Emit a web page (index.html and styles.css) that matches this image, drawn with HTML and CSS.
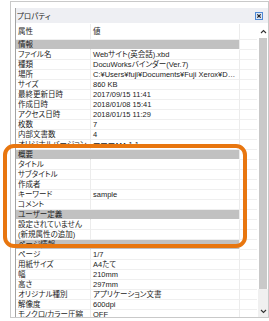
FILE: index.html
```html
<!DOCTYPE html>
<html lang="ja">

<head>
    <meta charset="UTF-8">
    <title>プロパティ</title>
    <link rel="stylesheet" href="styles.css">
</head>

<body>

    <div class="frame">
        <div class="pane">
            <div class="titlebar">
                <span class="title">プロパティ</span>
                <span class="close">
                    <svg width="8" height="8" viewBox="0 0 8 8">
                        <rect x="0.5" y="0.5" width="7" height="7" fill="#dbe7f7" stroke="#4f8ad6"/>
                        <path d="M2.3 2.3 L5.7 5.7 M5.7 2.3 L2.3 5.7" stroke="#222" stroke-width="1.2"/>
                    </svg>
                </span>
            </div>

            <div class="content">
                <div class="grid">
                    <div class="row head"><div class="name">属性</div><div class="val">値</div><div class="pad"></div></div>

                    <div class="row group"><div class="name">情報</div><div class="val"></div><div class="pad"></div></div>
                    <div class="row"><div class="name">ファイル名</div><div class="val">Webサイト(英会話).xbd</div><div class="pad"></div></div>
                    <div class="row"><div class="name">種類</div><div class="val">DocuWorksバインダー(Ver.7)</div><div class="pad"></div></div>
                    <div class="row"><div class="name">場所</div><div class="val">C:¥Users¥fuji¥Documents¥Fuji Xerox¥Documents¥Web</div><div class="pad"></div></div>
                    <div class="row"><div class="name">サイズ</div><div class="val">860 KB</div><div class="pad"></div></div>
                    <div class="row"><div class="name">最終更新日時</div><div class="val">2017/09/15 11:41</div><div class="pad"></div></div>
                    <div class="row"><div class="name">作成日時</div><div class="val">2018/01/08 15:41</div><div class="pad"></div></div>
                    <div class="row"><div class="name">アクセス日時</div><div class="val">2018/01/15 11:29</div><div class="pad"></div></div>
                    <div class="row"><div class="name">枚数</div><div class="val">7</div><div class="pad"></div></div>
                    <div class="row"><div class="name">内部文書数</div><div class="val">4</div><div class="pad"></div></div>
                    <div class="row"><div class="name">オリジナルバージョン</div><div class="val">ーーー・・・ 1.1</div><div class="pad"></div></div>

                    <div class="row group"><div class="name">概要</div><div class="val"></div><div class="pad"></div></div>
                    <div class="row"><div class="name">タイトル</div><div class="val"></div><div class="pad"></div></div>
                    <div class="row"><div class="name">サブタイトル</div><div class="val"></div><div class="pad"></div></div>
                    <div class="row"><div class="name">作成者</div><div class="val"></div><div class="pad"></div></div>
                    <div class="row"><div class="name">キーワード</div><div class="val">sample</div><div class="pad"></div></div>
                    <div class="row"><div class="name">コメント</div><div class="val"></div><div class="pad"></div></div>
                    <div class="row group"><div class="name">ユーザー定義</div><div class="val"></div><div class="pad"></div></div>
                    <div class="row"><div class="name">設定されていません</div><div class="val"></div><div class="pad"></div></div>
                    <div class="row"><div class="name">(新規属性の追加)</div><div class="val"></div><div class="pad"></div></div>

                    <div class="row group"><div class="name">ページ情報</div><div class="val"></div><div class="pad"></div></div>
                    <div class="row"><div class="name">ページ</div><div class="val">1/7</div><div class="pad"></div></div>
                    <div class="row"><div class="name">用紙サイズ</div><div class="val">A4たて</div><div class="pad"></div></div>
                    <div class="row"><div class="name">幅</div><div class="val">210mm</div><div class="pad"></div></div>
                    <div class="row"><div class="name">高さ</div><div class="val">297mm</div><div class="pad"></div></div>
                    <div class="row"><div class="name">オリジナル種別</div><div class="val">アプリケーション文書</div><div class="pad"></div></div>
                    <div class="row"><div class="name">解像度</div><div class="val">600dpi</div><div class="pad"></div></div>
                    <div class="row"><div class="name">モノクロ/カラー圧縮</div><div class="val">OFF</div><div class="pad"></div></div>
                </div>

                <div class="scroll">
                    <div class="arrow">
                        <svg width="7" height="5" viewBox="0 0 7 5"><polyline points="1,4 3.5,1.5 6,4" fill="none" stroke="#333" stroke-width="1.1"/></svg>
                    </div>
                    <div class="thumb"></div>
                    <div class="track"></div>
                    <div class="arrow">
                        <svg width="7" height="5" viewBox="0 0 7 5"><polyline points="1,1 3.5,3.5 6,1" fill="none" stroke="#333" stroke-width="1.1"/></svg>
                    </div>
                </div>
            </div>
        </div>
    </div>

    <div class="mark"></div>

</body>

</html>
```

FILE: styles.css
```css
* {
    box-sizing: border-box;
}

body {
    margin: 0;
    background: #ffffff;
    font-family: "Liberation Sans", "Noto Sans CJK JP", sans-serif;
    font-size: 7.5px;
    font-feature-settings: "palt";
    color: #1c1c1c;
}

.frame {
    margin: 1px 0 0 10px;
    width: 259px;
    height: 317px;
    border: 1px solid #c9c9c9;
    padding: 6px 0 0 4px;
}

.pane {
    height: 100%;
    border-left: 1px solid #a3a3a3;
    display: flex;
    flex-direction: column;
    overflow: hidden;
}

.titlebar {
    height: 15px;
    margin-top: 0;
    background: #eeeff3;
    display: flex;
    align-items: center;
    justify-content: space-between;
    padding: 0 5px 0 1px;
}

.close {
    display: flex;
}

.content {
    flex: 1;
    display: flex;
    margin-top: 1px;
    overflow: hidden;
}

.grid {
    width: 241px;
    display: grid;
    grid-template-columns: 75px 149px 17px;
    grid-auto-rows: 10px;
    align-content: start;
}

.row {
    display: contents;
}

.row > div {
    border-bottom: 1px solid #efefef;
    line-height: 9px;
    white-space: nowrap;
    overflow: hidden;
}

.name {
    padding-left: 2px;
    border-right: 1px solid #ececec;
}

.val {
    padding-left: 2px;
    border-right: 1px solid #ececec;
    text-overflow: ellipsis;
}

.head > div {
    height: 16px;
    line-height: 15px;
}

.grid > .row.head > div {
    grid-row: span 1;
}

.grid {
    grid-template-rows: 16px;
}

.group .name,
.group .val {
    background: #c1c1c1;
    border-bottom-color: #ffffff;
    border-right-color: #c1c1c1;
}

.group .val {
    border-right-color: #ececec;
}

.scroll {
    width: 11px;
    margin-left: 1px;
    display: flex;
    flex-direction: column;
}

.arrow {
    height: 14px;
    display: flex;
    align-items: center;
    justify-content: center;
}

.thumb {
    height: 251px;
    margin: 0 1px;
    background: #c9c9c9;
}

.track {
    flex: 1;
    background: #f0f0f0;
}

.scroll .arrow:last-child {
    height: 12px;
    background: #f0f0f0;
}

.mark {
    position: absolute;
    left: 3px;
    top: 144px;
    width: 244px;
    height: 104px;
    border: 4px solid #e8760f;
    border-radius: 11px;
}
```
